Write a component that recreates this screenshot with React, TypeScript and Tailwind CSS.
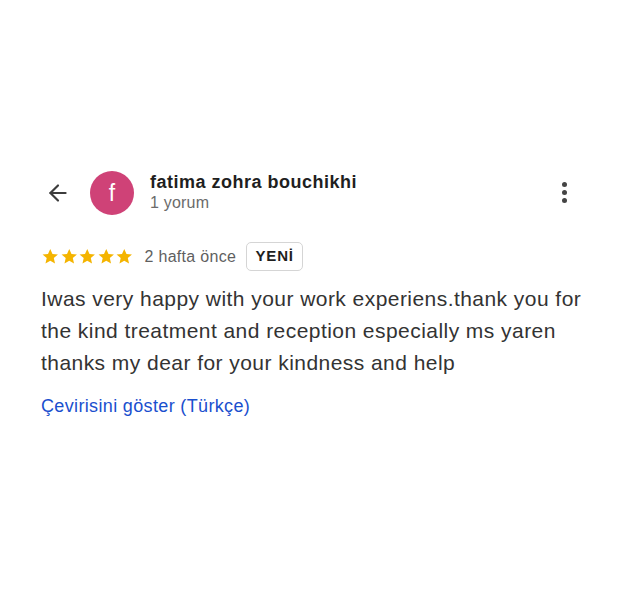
import { ArrowLeft } from 'lucide-react'

function Star() {
  return (
    <svg viewBox="0 0 24 24" className="w-[18.5px] h-[18.5px] fill-[#f4b400]">
      <path d="M12 2.5l2.9 6.6 7.1.6-5.4 4.7 1.6 7-6.2-3.7-6.2 3.7 1.6-7L2 9.7l7.1-.6z" />
    </svg>
  )
}

export default function App() {
  return (
    <div className="w-[623px] h-[593px] bg-white font-['Liberation_Sans',Arial,sans-serif]">
      <div className="pt-[171px] pl-[41px] pr-[30px]">
        {/* Header */}
        <div className="flex items-center">
          <ArrowLeft className="w-[26px] h-[26px] ml-[4px] text-[#3c3c3c]" strokeWidth={2} />
          <div className="ml-[19px] w-[44px] h-[44px] rounded-full bg-[#cf4277] flex items-center justify-center text-white text-[23px]">
            f
          </div>
          <div className="ml-[16px] flex-1 -mt-[2px]">
            <div className="text-[18px] font-bold text-[#1f1f1f] leading-[22px] tracking-[0.5px]">fatima zohra bouchikhi</div>
            <div className="text-[16px] text-[#6b6b6b] leading-[20px] tracking-[0.2px]">1 yorum</div>
          </div>
          <div className="flex flex-col gap-[3px] mr-[26px] -mt-[2px]">
            <span className="w-[5px] h-[5px] rounded-full bg-[#444]" />
            <span className="w-[5px] h-[5px] rounded-full bg-[#444]" />
            <span className="w-[5px] h-[5px] rounded-full bg-[#444]" />
          </div>
        </div>

        {/* Rating */}
        <div className="flex items-center mt-[27px]">
          <div className="flex">
            <Star />
            <Star />
            <Star />
            <Star />
            <Star />
          </div>
          <span className="ml-[11px] text-[16px] text-[#5f5f5f] tracking-[0.3px]">2 hafta önce</span>
          <span className="ml-[10px] h-[29px] w-[57px] flex items-center justify-center border border-[#d5d5d5] rounded-[5px] text-[15px] font-bold text-[#1f1f1f] tracking-[0.8px]">
            YENİ
          </span>
        </div>

        {/* Body */}
        <p className="mt-[12px] w-[550px] text-[21px] leading-[32px] text-[#333333] tracking-[0.45px]">
          Iwas very happy with your work experiens.thank you for the kind treatment and reception especially ms yaren thanks my dear for your kindness and help
        </p>
        <div className="mt-[14px] text-[18px] text-[#1a4fce] tracking-[0.35px]">Çevirisini göster (Türkçe)</div>
      </div>
    </div>
  )
}
